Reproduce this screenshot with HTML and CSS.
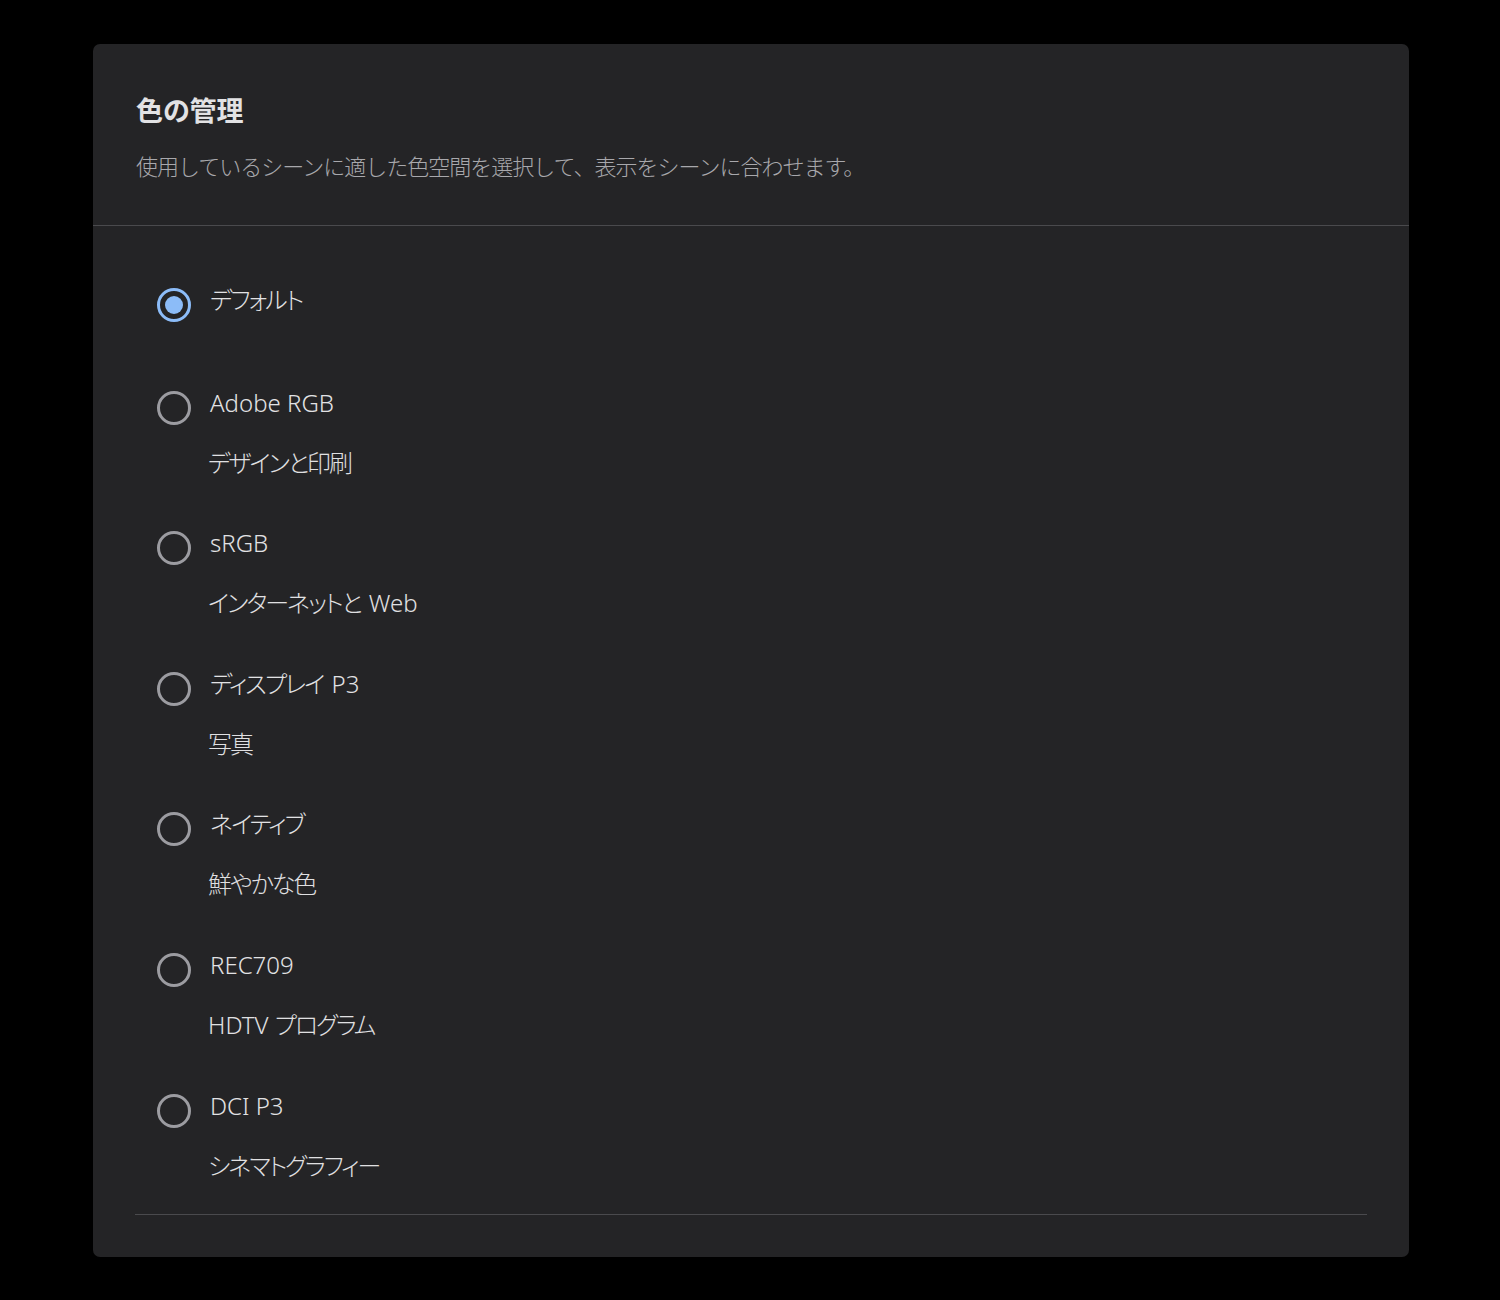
FILE: index.html
```html
<!DOCTYPE html>
<html lang="ja">
<head>
<meta charset="utf-8">
<title>色の管理</title>
<link rel="stylesheet" href="styles.css">
</head>
<body>
<section class="card">
  <header class="card-header">
    <h1 class="title">色の管理</h1>
    <p class="subtitle">使用しているシーンに適した色空間を選択して、表示をシーンに合わせます。</p>
  </header>
  <div class="options">
    <label class="option option--plain">
      <span class="radio radio--checked"></span>
      <span class="label"><span class="ja">デフォルト</span></span>
    </label>
    <label class="option">
      <span class="radio"></span>
      <span class="label">Adobe RGB</span>
      <span class="desc"><span class="ja">デザインと印刷</span></span>
    </label>
    <label class="option">
      <span class="radio"></span>
      <span class="label">sRGB</span>
      <span class="desc"><span class="ja">インターネットと</span> Web</span>
    </label>
    <label class="option">
      <span class="radio"></span>
      <span class="label"><span class="ja">ディスプレイ</span> P3</span>
      <span class="desc"><span class="ja">写真</span></span>
    </label>
    <label class="option">
      <span class="radio"></span>
      <span class="label"><span class="ja">ネイティブ</span></span>
      <span class="desc"><span class="ja">鮮やかな色</span></span>
    </label>
    <label class="option">
      <span class="radio"></span>
      <span class="label">REC709</span>
      <span class="desc">HDTV <span class="ja">プログラム</span></span>
    </label>
    <label class="option">
      <span class="radio"></span>
      <span class="label">DCI P3</span>
      <span class="desc"><span class="ja">シネマトグラフィー</span></span>
    </label>
  </div>
  <div class="footer-rule"></div>
</section>
</body>
</html>
```

FILE: styles.css
```css
html, body {
  margin: 0;
  padding: 0;
  background: #000;
}
body {
  padding: 44px 91px 43px 93px;
  font-family: "Noto Sans", "Noto Sans CJK JP", sans-serif;
  font-feature-settings: "palt";
  color: #dcdcdc;
}
.card {
  background: #242426;
  border-radius: 7px;
  height: 1213px;
  box-sizing: border-box;
  display: flex;
  flex-direction: column;
}
.card-header {
  flex-shrink: 0;
  box-sizing: border-box;
  padding: 48px 43px 0;
  height: 182px;
  border-bottom: 1px solid #4a4a4d;
}
.title {
  margin: 0 0 21px;
  height: 36px;
  font-family: "Noto Sans CJK JP", sans-serif;
  font-size: 27px;
  line-height: 36px;
  font-weight: 700;
  color: #e2e2e4;
}
.subtitle {
  margin: 0;
  height: 32px;
  font-family: "Noto Sans CJK JP", sans-serif;
  font-feature-settings: normal;
  font-size: 22px;
  line-height: 32px;
  letter-spacing: -1px;
  font-weight: 300;
  color: #a8a8ac;
}
.options {
  flex-shrink: 0;
  padding: 58px 0 0 64px;
  display: flex;
  flex-direction: column;
  gap: 48.6px;
}
.option {
  display: grid;
  grid-template-columns: 34px auto;
  column-gap: 18px;
  align-items: start;
  justify-content: start;
}
.option--plain {
  padding-bottom: 22px;
}
.radio {
  grid-column: 1;
  grid-row: 1;
  width: 34px;
  height: 34px;
  box-sizing: border-box;
  border: 3px solid #9c9ca1;
  border-radius: 50%;
  margin: 4px 0 -6px;
  position: relative;
}
.radio--checked {
  border-color: #8cbcf8;
}
.radio--checked::after {
  content: "";
  position: absolute;
  left: 5px;
  top: 5px;
  width: 18px;
  height: 18px;
  border-radius: 50%;
  background: #8cbcf8;
}
.label {
  grid-column: 2;
  grid-row: 1;
  display: block;
  height: 32px;
  font-size: 24px;
  line-height: 32px;
  font-weight: 300;
  color: #e2e2e4;
  padding-left: 1px;
  white-space: nowrap;
}
.desc {
  grid-column: 2;
  grid-row: 2;
  display: block;
  height: 32px;
  margin-top: 28px;
  font-size: 24px;
  line-height: 32px;
  font-weight: 300;
  color: #e0e0e2;
  margin-left: -1px;
  white-space: nowrap;
}
.ja {
  letter-spacing: -2px;
  margin-right: 2px;
}
.footer-rule {
  flex-shrink: 0;
  margin: auto 42px 42px;
  border-top: 1px solid #4a4a4d;
}
```
